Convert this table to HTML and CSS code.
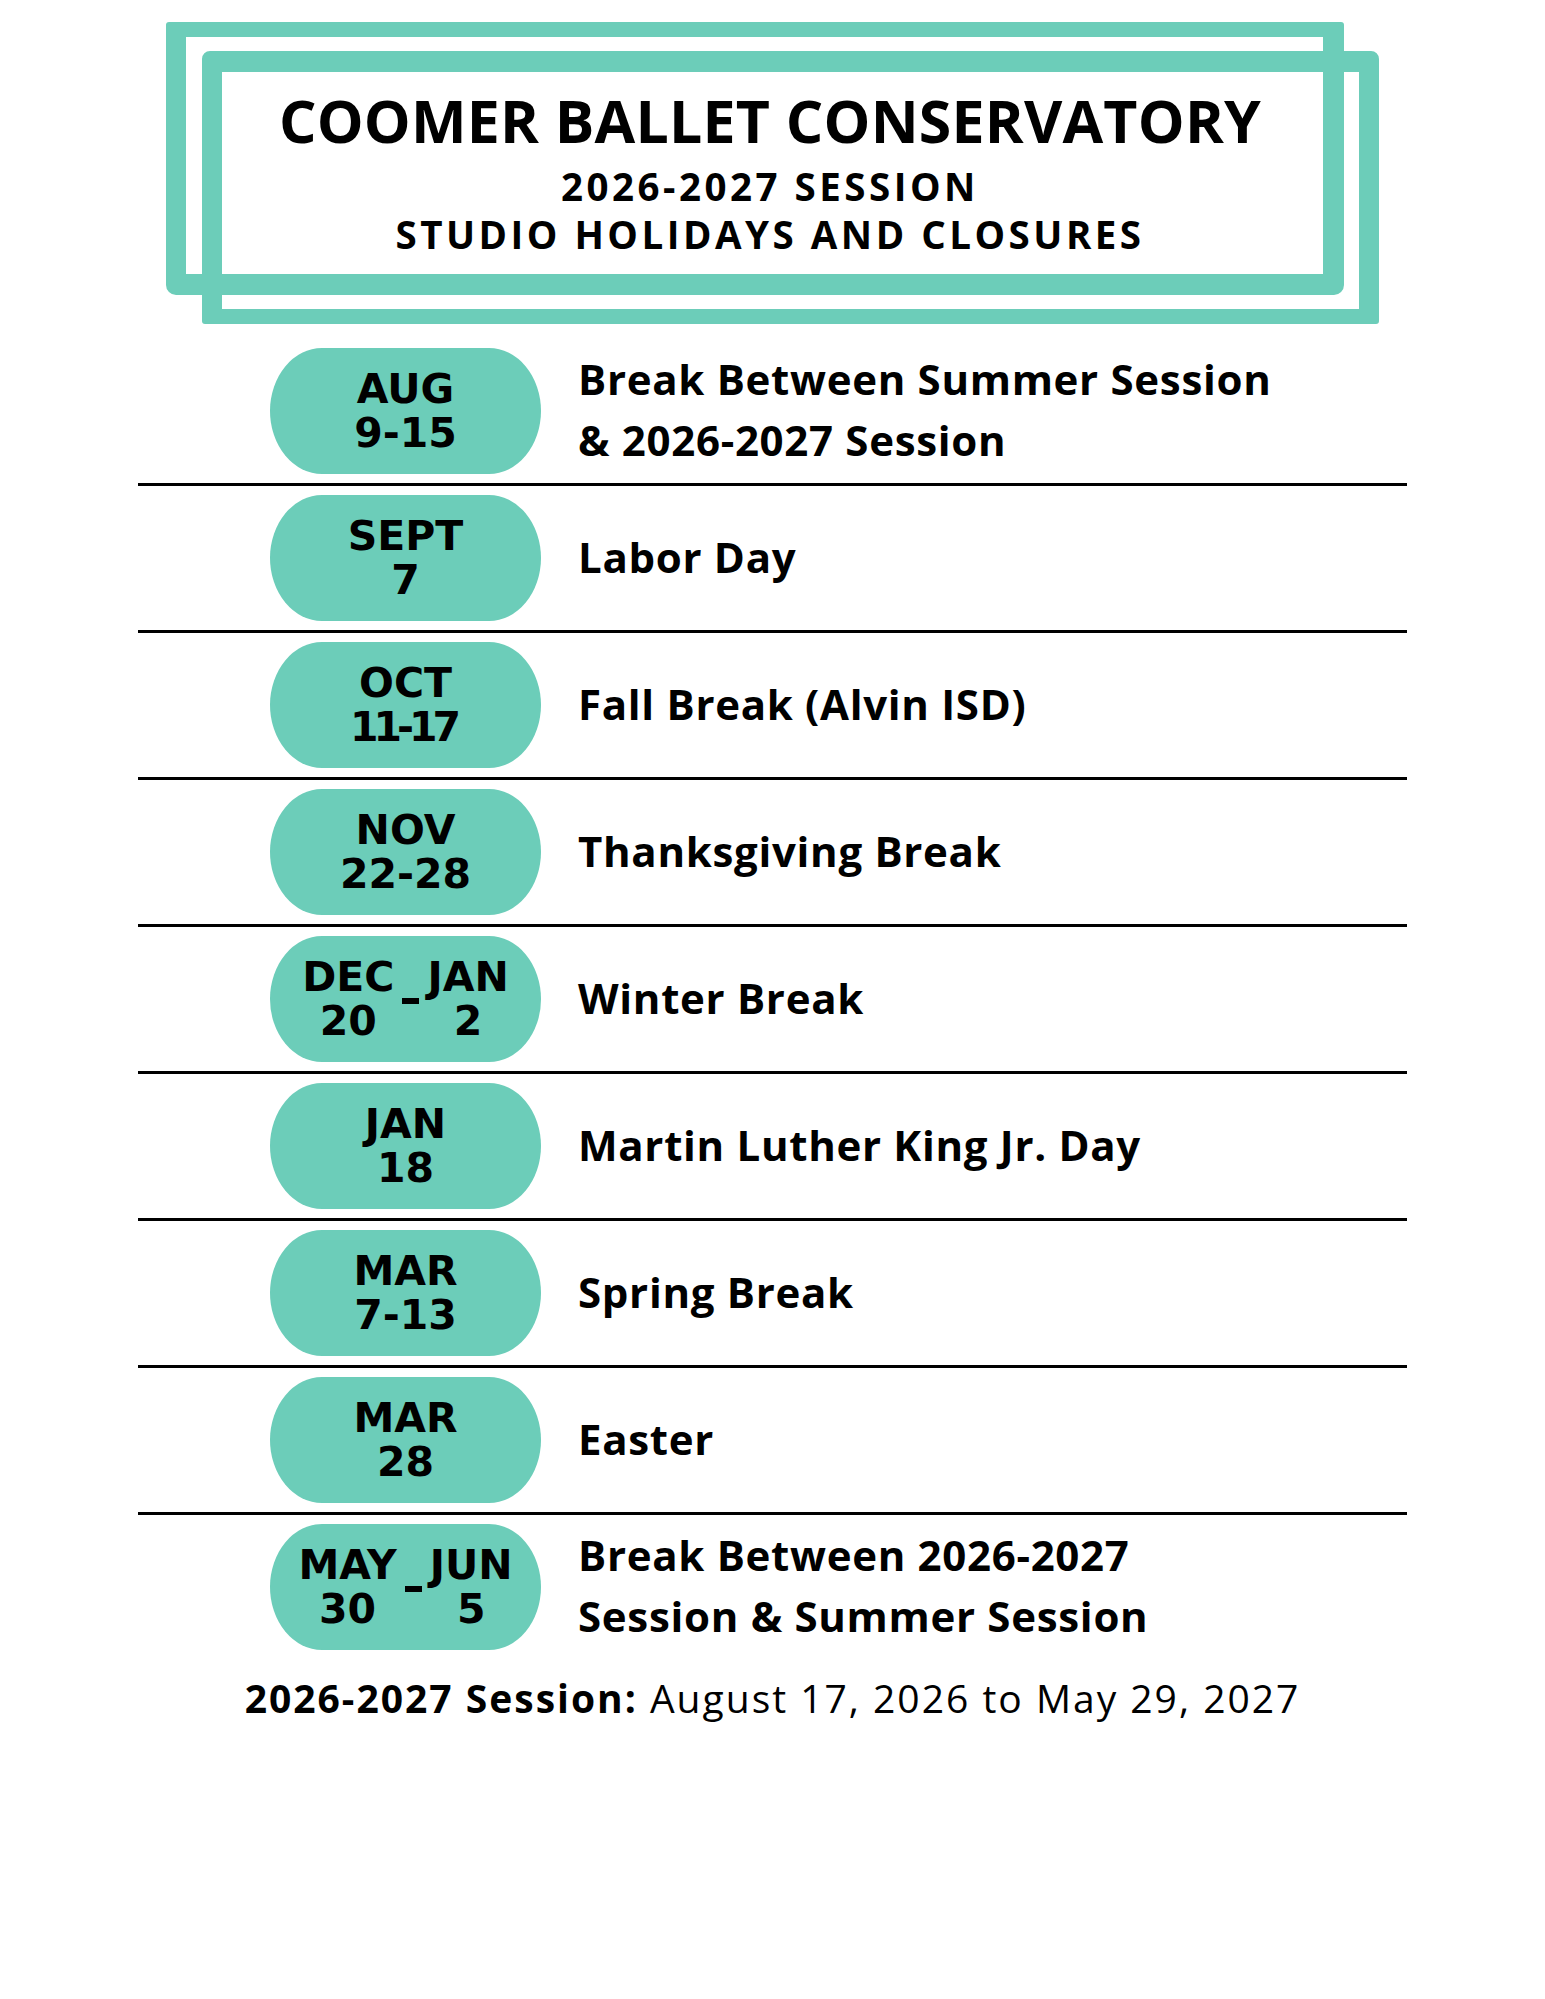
FILE: index.html
```html
<!DOCTYPE html>
<html lang="en">
<head>
<meta charset="utf-8">
<title>Coomer Ballet Conservatory – Studio Holidays and Closures</title>
<link rel="stylesheet" href="styles.css">
</head>
<body>
<header class="masthead">
  <div class="frame frame-back"></div>
  <div class="frame frame-front"></div>
  <div class="titles">
    <h1 class="title">COOMER BALLET CONSERVATORY</h1>
    <p class="subtitle">2026-2027 SESSION<br>STUDIO HOLIDAYS AND CLOSURES</p>
  </div>
</header>

<main class="schedule">
  <div class="row">
    <div class="pill"><span>AUG</span><span>9-15</span></div>
    <div class="desc">Break Between Summer Session<br>&amp; 2026-2027 Session</div>
  </div>
  <div class="row">
    <div class="pill"><span>SEPT</span><span>7</span></div>
    <div class="desc">Labor Day</div>
  </div>
  <div class="row">
    <div class="pill"><span>OCT</span><span class="ones">11-17</span></div>
    <div class="desc">Fall Break (Alvin ISD)</div>
  </div>
  <div class="row">
    <div class="pill"><span>NOV</span><span>22-28</span></div>
    <div class="desc">Thanksgiving Break</div>
  </div>
  <div class="row">
    <div class="pill pill-range">
      <div class="pcol"><span>DEC</span><span>20</span></div>
      <span class="dash"></span>
      <div class="pcol"><span>JAN</span><span>2</span></div>
    </div>
    <div class="desc">Winter Break</div>
  </div>
  <div class="row">
    <div class="pill"><span>JAN</span><span>18</span></div>
    <div class="desc">Martin Luther King Jr. Day</div>
  </div>
  <div class="row">
    <div class="pill"><span>MAR</span><span>7-13</span></div>
    <div class="desc">Spring Break</div>
  </div>
  <div class="row">
    <div class="pill"><span>MAR</span><span>28</span></div>
    <div class="desc">Easter</div>
  </div>
  <div class="row">
    <div class="pill pill-range">
      <div class="pcol"><span>MAY</span><span>30</span></div>
      <span class="dash"></span>
      <div class="pcol"><span>JUN</span><span>5</span></div>
    </div>
    <div class="desc">Break Between 2026-2027<br>Session &amp; Summer Session</div>
  </div>
</main>

<p class="note"><strong>2026-2027 Session:</strong> August 17, 2026 to May 29, 2027</p>
</body>
</html>
```

FILE: styles.css
```css
* { box-sizing: border-box; }

html, body {
  margin: 0;
  padding: 0;
  background: #ffffff;
  color: #000000;
}

body {
  width: 1545px;
  min-height: 1999px;
  font-family: "Open Sans", "Noto Sans", sans-serif;
}

/* ---------- header with overlapping frames ---------- */
.masthead {
  display: grid;
}

.masthead > * {
  grid-area: 1 / 1;
}

.frame {
  border-style: solid;
  border-color: #6ccdb9;
}

.frame-back {
  margin: 22px 0 0 166px;
  width: 1178px;
  height: 273px;
  border-width: 15px 21px 21px 20px;
  border-radius: 3px 3px 10px 10px;
}

.frame-front {
  margin: 51px 0 0 202px;
  width: 1177px;
  height: 273px;
  border-width: 21px 20px 15px 20px;
  border-radius: 8px 8px 3px 3px;
}

.titles {
  padding: 91px 5px 0 0;
  text-align: center;
}

.title {
  margin: 0;
  font-size: 59px;
  line-height: 58px;
  font-weight: 700;
  letter-spacing: 0.2px;
}

.subtitle {
  margin: 14px 0 0;
  font-size: 38.5px;
  line-height: 47.6px;
  font-weight: 700;
  letter-spacing: 3.5px;
}

/* ---------- schedule rows ---------- */
.schedule {
  display: block;
  margin: 15px 0 0 138px;
  width: 1269px;
}

.row {
  display: flex;
  align-items: center;
  padding: 9px 0;
  border-bottom: 3px solid #000;
}

.row:last-child {
  border-bottom: none;
}

.pill {
  flex: 0 0 271px;
  height: 126px;
  margin-left: 132px;
  border-radius: 52px / 63px;
  background: #6ccdb9;
  display: flex;
  flex-direction: column;
  align-items: center;
  justify-content: center;
  font-family: "DejaVu Sans", sans-serif;
  font-weight: 700;
  font-size: 41px;
  line-height: 44px;
  text-align: center;
}

.ones {
  letter-spacing: -5px;
  margin-left: -5px;
}

.pill-range {
  flex-direction: row;
}

.pcol {
  display: flex;
  flex-direction: column;
  align-items: center;
}

.dash {
  width: 17px;
  height: 6px;
  margin: 4px 8px 0;
  background: #000;
}

.desc {
  margin-left: 37px;
  padding-bottom: 4px;
  font-size: 42px;
  line-height: 61px;
  font-weight: 700;
  letter-spacing: 0.7px;
}

/* ---------- footer note ---------- */
.note {
  margin: 14px 0 0;
  text-align: center;
  font-size: 39px;
  line-height: 50px;
  font-weight: 400;
  letter-spacing: 2px;
}

.note strong {
  font-weight: 700;
}
```
